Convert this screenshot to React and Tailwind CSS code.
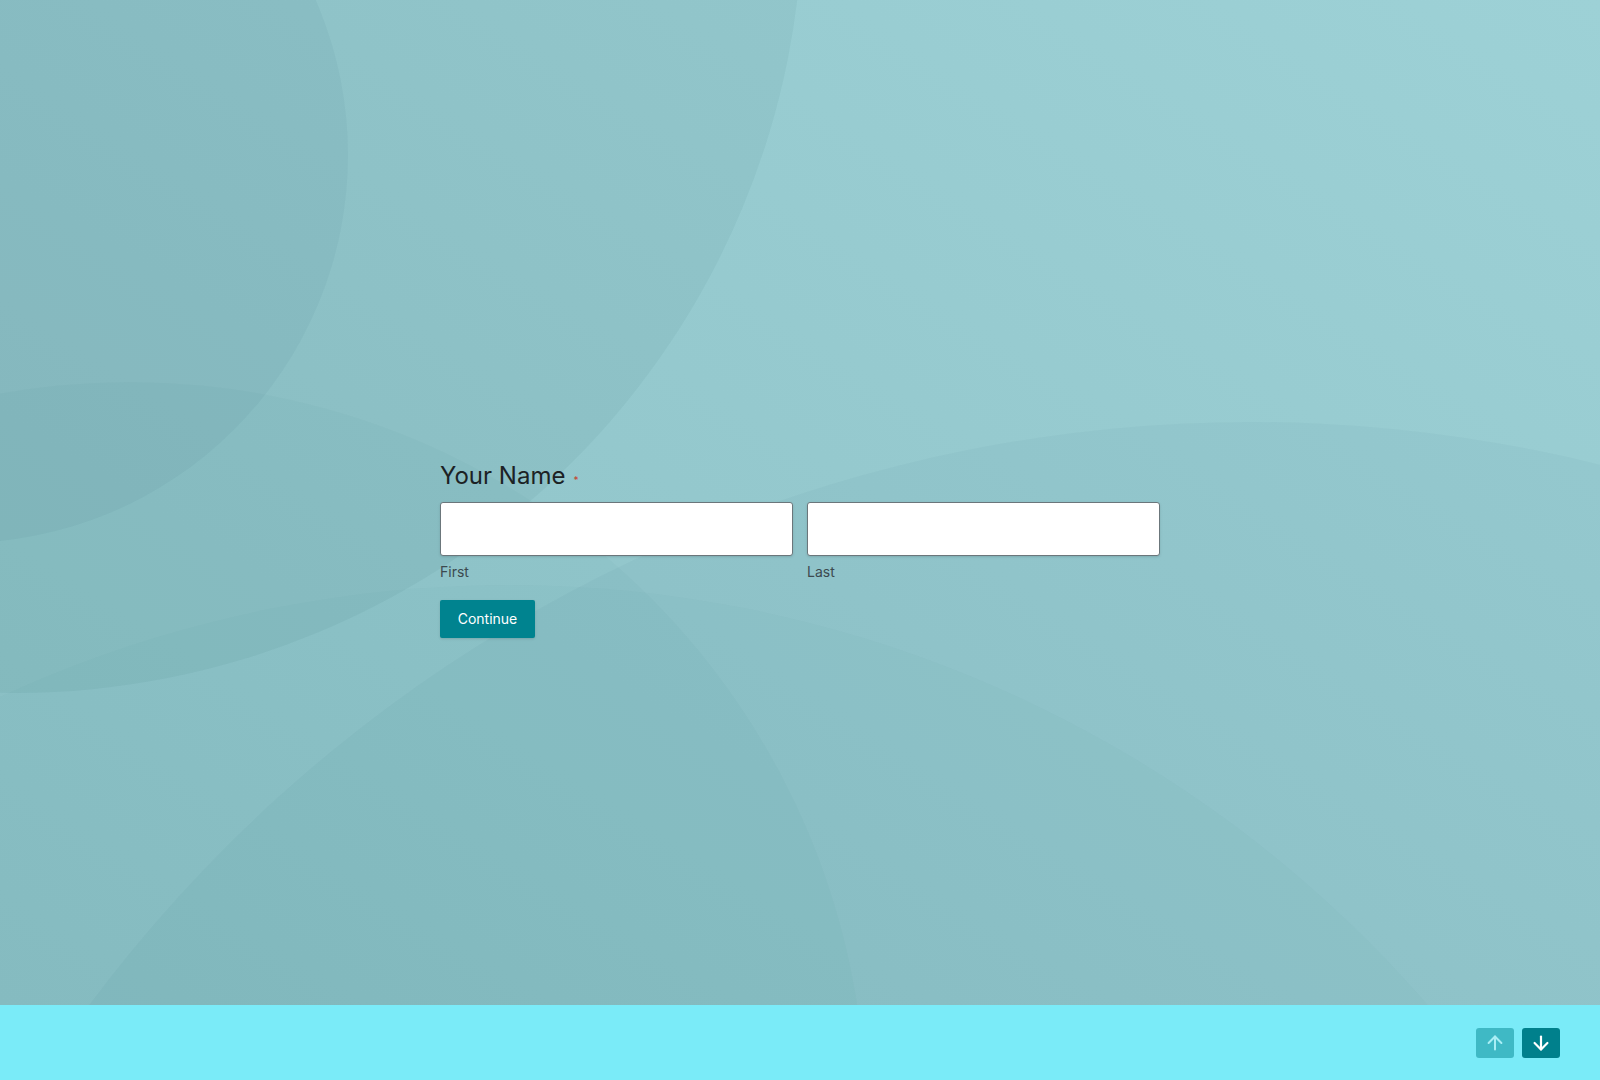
import React from 'react';
import { ArrowUp, ArrowDown } from 'lucide-react';

// decorative circles behind the form
const Backdrop = () => (
  <svg
    className="absolute inset-0 w-full h-full"
    viewBox="0 0 1600 1005"
    preserveAspectRatio="xMidYMid slice"
    xmlns="http://www.w3.org/2000/svg"
  >
    <defs>
      <linearGradient id="bg" x1="0" y1="1" x2="1" y2="0">
        <stop offset="0" stopColor="#8cc0c5" />
        <stop offset="1" stopColor="#9dd1d6" />
      </linearGradient>
    </defs>
    <rect width="1600" height="1005" fill="url(#bg)" />
    <g fill="#0d4f57">
      <circle cx="15" cy="-95" r="788" fillOpacity="0.05" />
      <circle cx="-40" cy="155" r="388" fillOpacity="0.045" />
      <circle cx="130" cy="1118" r="736" fillOpacity="0.022" />
      <circle cx="509" cy="1800" r="1215" fillOpacity="0.02" />
      <circle cx="1251" cy="1871" r="1449" fillOpacity="0.03" />
    </g>
  </svg>
);

const NameField = () => (
  <div className="w-[720px] mx-auto">
    <h2 className="text-2xl text-[#1c2224] flex items-start">
      Your Name
      <span className="ml-2 mt-[15px] text-[10px] leading-none text-[#c4432e]">*</span>
    </h2>
    <div className="mt-[10px] grid grid-cols-2 gap-[14px]">
      <div>
        <input
          type="text"
          className="block w-full h-[54px] bg-white border border-[#6b767b] rounded-[3px] shadow-sm outline-none px-3"
        />
        <p className="mt-[6px] text-sm text-[#3c4a4f]">First</p>
      </div>
      <div>
        <input
          type="text"
          className="block w-full h-[54px] bg-white border border-[#6b767b] rounded-[3px] shadow-sm outline-none px-3"
        />
        <p className="mt-[6px] text-sm text-[#3c4a4f]">Last</p>
      </div>
    </div>
    <button
      type="button"
      className="mt-[18px] h-[38px] w-[95px] bg-[#00838f] text-white text-sm rounded-[2px] shadow-sm"
    >
      Continue
    </button>
  </div>
);

const App = () => {
  return (
    <div
      className="w-full h-[1080px] flex flex-col overflow-hidden"
      style={{ fontFamily: 'Inter, "Noto Sans", sans-serif' }}
    >
      <main className="relative flex-1">
        <Backdrop />
        <div className="relative pt-[460px]">
          <NameField />
        </div>
      </main>

      <footer className="h-[75px] bg-[#7aebf8] flex items-center justify-end gap-2 pr-[40px]">
        <button
          type="button"
          className="w-[38px] h-[30px] rounded-[3px] bg-[#3fb9c5] flex items-center justify-center"
        >
          <ArrowUp size={22} strokeWidth={2.2} className="text-[#a9eef5]" />
        </button>
        <button
          type="button"
          className="w-[38px] h-[30px] rounded-[3px] bg-[#00808c] flex items-center justify-center"
        >
          <ArrowDown size={22} strokeWidth={2.4} className="text-white" />
        </button>
      </footer>
    </div>
  );
};

export default App;
